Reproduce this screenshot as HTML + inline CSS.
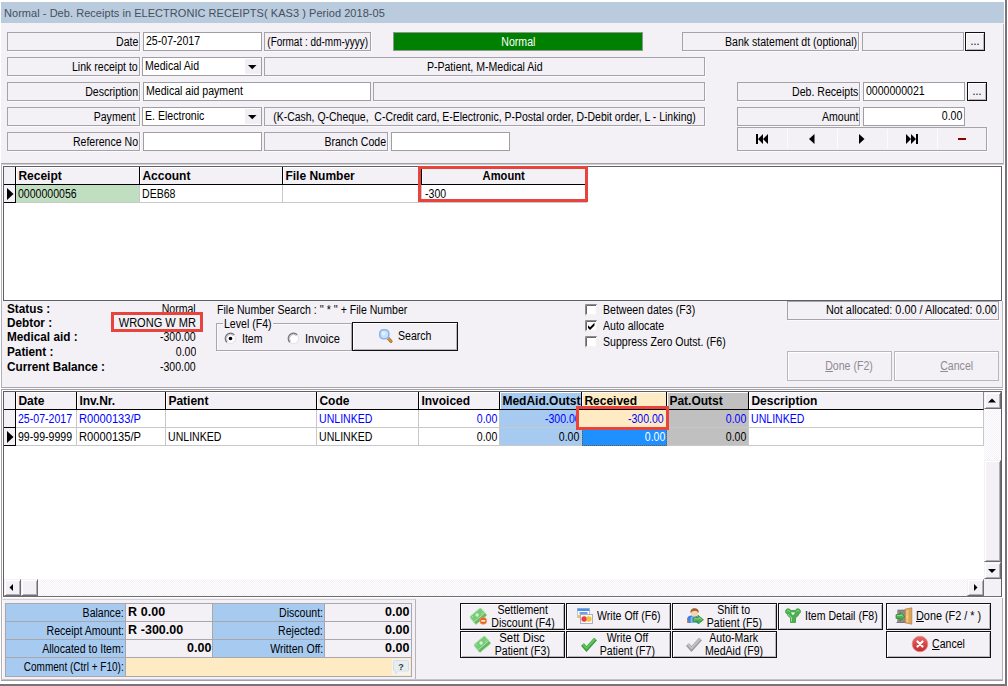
<!DOCTYPE html>
<html>
<head>
<meta charset="utf-8">
<title>Deb. Receipts</title>
<style>
html,body{margin:0;padding:0;}
body{width:1008px;height:686px;overflow:hidden;background:#fff;font-family:"Liberation Sans",sans-serif;font-size:12px;color:#000;position:relative;}
*{box-sizing:border-box;}
.abs,.lb,.in,.t,.btn,.hd,.c,.bl,.bv{position:absolute;white-space:nowrap;overflow:hidden;}
.s{display:inline-block;transform:scaleX(var(--sx,.88));transform-origin:0 50%;}
.r .s,.lb .s,.bl .s,.bv .s{transform-origin:100% 50%;}
.ctr .s,.bt .s,.dis .s{transform-origin:50% 50%;}
.l .s{transform-origin:0 50%;}
#main{left:1px;top:2px;width:1003px;height:679px;background:#f3f0f6;}
#title{left:1px;top:2px;width:1003px;height:21px;background:#b9cbdd;color:#44505e;font-size:11px;line-height:22px;padding-left:3px;letter-spacing:0.045px;}
.lb{height:19px;border:1px solid #a5a3a8;background:#f3f0f6;line-height:19px;text-align:right;padding-right:1px;box-shadow:1px 1px 0 #fbfafc;}
.lb.ctr{text-align:center;padding:0;}
.ctr{display:flex;justify-content:center;}
.lb:not(.ctr),.bl{display:flex;justify-content:flex-end;}
.in{height:19px;background:#fff;border:1px solid #a09ea3;line-height:16px;padding-left:2px;}
.in.r{padding-left:0;padding-right:2px;}
.t{line-height:13px;height:14px;}
.b{font-weight:bold;--sx:.98;}
.r{text-align:right;}
.btn{border:1px solid #111;background:#f3f0f6;box-shadow:inset 1px 1px 0 #fff, inset -1px -1px 0 #b8b6bb;}
.blue{color:#0000ff;}
.hd{height:18px;background:#f3f0f6;border-right:1px solid #000;border-bottom:1px solid #000;font-weight:bold;line-height:18px;padding-left:2.400px;box-shadow:inset 1px 1px 0 #fff;--sx:1;}
.c{height:18px;background:#fff;border-right:1px solid #c8c8c8;border-bottom:1px solid #c8c8c8;line-height:18px;padding-left:2.400px;}
.c.r{padding-right:2px;padding-left:0;}
.dis{border:1px solid #b9b7bc;background:#f3f0f6;color:#8d8b90;text-align:center;line-height:29px;box-shadow:inset 1px 1px 0 #fff;}
.h2{top:392px;height:18px;line-height:19px;}
.r1{top:410px;}
.r2{top:428px;}
.sb{background:#f3f0f6;border:1px solid #f3f0f6;border-right-color:#6f6d72;border-bottom-color:#6f6d72;box-shadow:inset 1px 1px 0 #fff, inset -1px -1px 0 #b0aeb3;}
.bl,.bv{height:18px;line-height:18px;text-align:right;}
.bl{background:#a6caf0;padding-right:1px;border-bottom:1px solid #a9a7ab;}
.bv{background:#f3f0f6;font-weight:bold;font-size:12px;padding-right:1px;border-bottom:1px solid #a9a7ab;--sx:1.04;line-height:17px;}
.trk{background:repeating-conic-gradient(#fff 0% 25%,#f3f0f6 0% 50%) 0 0/2px 2px;}
.bt{text-align:center;height:27px;line-height:13px;}
</style>
</head>
<body>
<div id="main" class="abs"></div>
<div id="title" class="abs">Normal - Deb. Receipts in ELECTRONIC RECEIPTS( KAS3 ) Period 2018-05</div>

<!-- top form -->
<div class="lb" style="left:7px;top:32px;width:133px;"><span class="s">Date</span></div>
<div class="lb" style="left:7px;top:57px;width:133px;"><span class="s">Link receipt to</span></div>
<div class="lb" style="left:7px;top:82px;width:133px;"><span class="s">Description</span></div>
<div class="lb" style="left:7px;top:107px;width:133px;padding-right:4px;"><span class="s">Payment</span></div>
<div class="lb" style="left:7px;top:132px;width:133px;"><span class="s">Reference No</span></div>
<div class="in" style="left:143px;top:32px;width:119px;"><span class="s">25-07-2017</span></div>
<div class="in" style="left:142px;top:57px;width:120px;"><span class="s">Medical Aid</span></div>
<div class="in" style="left:143px;top:82px;width:228px;"><span class="s">Medical aid payment</span></div>
<div class="in" style="left:142px;top:107px;width:120px;"><span class="s">E. Electronic</span></div>
<div class="in" style="left:143px;top:132px;width:119px;"></div>
<div class="lb ctr" style="left:264px;top:32px;width:107px;"><span class="s" style="--sx:0.83;">(Format : dd-mm-yyyy)</span></div>
<div class="abs ctr" style="left:393px;top:32px;width:250px;height:19px;background:#008000;color:#fff;text-align:center;line-height:18px;border:1px solid #8c9a8c;"><span class="s">Normal</span></div>
<div class="lb ctr" style="left:264px;top:57px;width:441px;"><span class="s">P-Patient, M-Medical Aid</span></div>
<div class="lb ctr" style="left:373px;top:82px;width:332px;"></div>
<div class="lb ctr" style="left:264px;top:107px;width:441px;"><span class="s" style="--sx:0.871;">(K-Cash, Q-Cheque,&nbsp; C-Credit card, E-Electronic, P-Postal order, D-Debit order, L - Linking)</span></div>
<div class="lb" style="left:264px;top:132px;width:124px;"><span class="s">Branch Code</span></div>
<div class="in" style="left:391px;top:132px;width:119px;"></div>
<div class="lb" style="left:682px;top:32px;width:177px;"><span class="s">Bank statement dt (optional)</span></div>
<div class="lb" style="left:862px;top:32px;width:102px;"></div>
<div class="btn ctr" style="left:965px;top:32px;width:20px;height:19px;text-align:center;line-height:17px;"><span class="s">...</span></div>
<div class="lb" style="left:737px;top:82px;width:123px;"><span class="s">Deb. Receipts</span></div>
<div class="in" style="left:863px;top:82px;width:102px;"><span class="s">0000000021</span></div>
<div class="btn ctr" style="left:967px;top:82px;width:20px;height:19px;text-align:center;line-height:17px;"><span class="s">...</span></div>
<div class="lb" style="left:737px;top:107px;width:123px;"><span class="s">Amount</span></div>
<div class="in r" style="left:863px;top:107px;width:102px;"><span class="s">0.00</span></div>
<div class="lb" style="left:737px;top:127px;width:250px;height:24px;line-height:24px;"></div>

<!-- nav buttons -->
<svg class="abs" style="left:737px;top:127px;" width="250" height="25" viewBox="0 0 250 25">
  <g fill="#fbfafc"><rect x="50" y="2" width="1" height="20"/><rect x="100" y="2" width="1" height="20"/><rect x="150" y="2" width="1" height="20"/><rect x="200" y="2" width="1" height="20"/></g>
  <g fill="#000">
    <rect x="19" y="7" width="2" height="10"/><path d="M26 7v10l-5-5zM31 7v10l-5-5z"/>
    <path d="M77.500 7v10l-5.500-5z"/>
    <path d="M122 7v10l5.500-5z"/>
    <path d="M169 7v10l5-5zM174 7v10l5-5z"/><rect x="179" y="7" width="2" height="10"/>
  </g>
  <rect x="221" y="11" width="8" height="2" fill="#8b0000"/>
</svg>
<!-- combo arrows -->
<div class="abs" style="left:245px;top:59px;width:16px;height:15px;background:#f1eff3;"></div>
<div class="abs" style="left:245px;top:109px;width:16px;height:15px;background:#f1eff3;"></div>
<svg class="abs" style="left:248px;top:65px;" width="9" height="5"><path d="M0 0h8.500l-4.250 4.250z" fill="#000"/></svg>
<svg class="abs" style="left:248px;top:115px;" width="9" height="5"><path d="M0 0h8.500l-4.250 4.250z" fill="#000"/></svg>

<!-- top panel bottom edge -->
<div class="abs" style="left:1px;top:163px;width:1003px;height:1px;background:#a3a1a6;"></div>
<div class="abs" style="left:1px;top:164px;width:1003px;height:1px;background:#cfcdd2;"></div>
<div class="abs" style="left:1px;top:165px;width:1px;height:223px;background:#b3b1b6;"></div>

<!-- grid 1 -->
<div class="abs" style="left:2px;top:165px;width:1001px;height:136px;background:#fff;"></div>
<div class="abs" style="left:3px;top:166px;width:999px;height:135px;background:#fff;border:1px solid #605e63;"></div>
<div class="abs" style="left:4px;top:167px;width:12px;height:18px;background:#f3f0f6;border-right:1px solid #000;border-bottom:1px solid #000;"></div>
<div class="hd" style="left:16px;width:124px;top:167px;height:18px;line-height:18px;"><span class="s">Receipt</span></div>
<div class="hd" style="left:140px;width:143px;top:167px;height:18px;line-height:18px;"><span class="s">Account</span></div>
<div class="hd" style="left:283px;width:139px;top:167px;height:18px;line-height:18px;"><span class="s">File Number</span></div>
<div class="hd ctr" style="left:422px;width:165px;--sx:.93;top:167px;height:18px;line-height:18px;text-align:center;padding-left:0;"><span class="s">Amount</span></div>
<div class="abs" style="left:4px;top:185px;width:12px;height:18px;background:#f3f0f6;border-right:1px solid #000;border-bottom:1px solid #000;"></div>
<svg class="abs" style="left:4px;top:185px;" width="12" height="18"><path d="M3 3v12l6.500-6z" fill="#000"/></svg>
<div class="c" style="left:16px;width:124px;top:185px;background:#c0dfc0;"><span class="s">0000000056</span></div>
<div class="c" style="left:140px;width:143px;top:185px;"><span class="s">DEB68</span></div>
<div class="c" style="left:283px;width:139px;top:185px;"></div>
<div class="c" style="left:422px;width:165px;top:185px;padding-left:2.500px;"><span class="s">-300</span></div>
<div class="abs" style="left:418px;top:166px;width:170px;height:36px;border:3px solid #e8433c;"></div>

<!-- mid panel -->
<div class="t b" style="left:6.5px;top:303px;"><span class="s">Status :</span></div>
<div class="t b" style="left:6.5px;top:317px;"><span class="s">Debtor :</span></div>
<div class="t b" style="left:6.5px;top:331px;"><span class="s">Medical aid :</span></div>
<div class="t b" style="left:6.5px;top:346px;"><span class="s">Patient :</span></div>
<div class="t b" style="left:6.5px;top:361px;"><span class="s">Current Balance :</span></div>
<div class="t r" style="left:110px;top:303px;width:86px;"><span class="s">Normal</span></div>
<div class="t r" style="left:110px;top:331px;width:86px;"><span class="s">-300.00</span></div>
<div class="t r" style="left:110px;top:346px;width:86px;"><span class="s">0.00</span></div>
<div class="t r" style="left:110px;top:361px;width:86px;"><span class="s">-300.00</span></div>
<div class="abs" style="left:111px;top:312px;width:92px;height:20px;border:3px solid #e8433c;background:#f3f0f6;"></div>
<div class="t r" style="left:110px;top:317px;width:86px;"><span class="s" style="--sx:0.92;">WRONG W MR</span></div>
<div class="t" style="left:217px;top:304px;"><span class="s">File Number Search : '' * '' + File Number</span></div>
<div class="abs" style="left:216px;top:323px;width:136px;height:28px;border:1px solid #a9a7ab;box-shadow:1px 1px 0 #fbfafc, inset 1px 1px 0 #fbfafc;"></div>
<div class="t" style="left:223px;top:318px;background:#f3f0f6;padding:0 1px;width:50px;"><span class="s">Level (F4)</span></div>
<svg class="abs" style="left:224px;top:332px;" width="13" height="13"><circle cx="6.500" cy="6.500" r="5.200" fill="#fff" stroke="#e4e2e6" stroke-width="1.200"/><path d="M2.800 10.200A5.200 5.200 0 0 1 10.200 2.800" fill="none" stroke="#7a787d" stroke-width="1.300"/><path d="M3.600 9.400A4.100 4.100 0 0 1 9.400 3.600" fill="none" stroke="#b0aeb3" stroke-width="0.900"/><circle cx="6.500" cy="6.500" r="1.800" fill="#000"/></svg>
<div class="t" style="left:242px;top:333px;"><span class="s">Item</span></div>
<svg class="abs" style="left:287px;top:332px;" width="13" height="13"><circle cx="6.500" cy="6.500" r="5.200" fill="#fff" stroke="#e4e2e6" stroke-width="1.200"/><path d="M2.800 10.200A5.200 5.200 0 0 1 10.200 2.800" fill="none" stroke="#7a787d" stroke-width="1.300"/><path d="M3.600 9.400A4.100 4.100 0 0 1 9.400 3.600" fill="none" stroke="#b0aeb3" stroke-width="0.900"/></svg>
<div class="t" style="left:305px;top:333px;"><span class="s" style="--sx:0.92;">Invoice</span></div>
<div class="btn" style="left:352px;top:322px;width:106px;height:29px;"></div>
<svg class="abs" style="left:378px;top:328px;" width="16" height="16" viewBox="0 0 16 16"><path d="M9.500 9.500l3.500 3.800" stroke="#b8742a" stroke-width="3.200" stroke-linecap="round"/><path d="M10 10l3 3.300" stroke="#d99a4e" stroke-width="1.200" stroke-linecap="round"/><rect x="1.800" y="1.800" width="9" height="9" rx="3.500" fill="#c9dff8" stroke="#86b6ee" stroke-width="1.600"/><circle cx="5.500" cy="5.500" r="2" fill="#e3effc"/></svg>
<div class="t" style="left:398px;top:330px;"><span class="s">Search</span></div>
<svg class="abs" style="left:585px;top:304px;" width="13" height="46">
 <rect x="0" y="0" width="12" height="11.500" fill="#fff"/><path d="M0.500 11.5v-11h11.500" fill="none" stroke="#8e8c91"/><path d="M1.500 10.5v-9h9.500" fill="none" stroke="#6a686d"/><path d="M0 11h12v-10.500" fill="none" stroke="#eceaee"/>
 <rect x="0" y="16" width="12" height="11.500" fill="#fff"/><path d="M0.500 27.5v-11h11.500" fill="none" stroke="#8e8c91"/><path d="M1.500 26.5v-9h9.500" fill="none" stroke="#6a686d"/><path d="M0 27h12v-10.500" fill="none" stroke="#eceaee"/>
 <rect x="0" y="32" width="12" height="11.500" fill="#fff"/><path d="M0.500 43.5v-11h11.500" fill="none" stroke="#8e8c91"/><path d="M1.500 42.5v-9h9.500" fill="none" stroke="#6a686d"/><path d="M0 43h12v-10.500" fill="none" stroke="#eceaee"/>
 <path d="M3 21.300l2 2l4.500-4.500v2.800l-4.500 4.500l-2-2z" fill="#000"/>
</svg>
<div class="t" style="left:603px;top:304px;"><span class="s">Between dates (F3)</span></div>
<div class="t" style="left:603px;top:320px;"><span class="s">Auto allocate</span></div>
<div class="t" style="left:603px;top:336px;"><span class="s">Suppress Zero Outst. (F6)</span></div>
<div class="lb" style="left:787px;top:301px;width:212px;height:19px;line-height:17px;"><span class="s" style="--sx:0.905;">Not allocated: 0.00 / Allocated: 0.00</span></div>
<div class="abs dis" style="left:787px;top:351px;width:105px;height:30px;padding-left:20px;"><span class="s"><u>D</u>one (F2)</span></div>
<div class="abs dis" style="left:894px;top:351px;width:105px;height:30px;padding-left:20px;"><span class="s"><u>C</u>ancel</span></div>

<!-- separator -->
<div class="abs" style="left:1px;top:387px;width:1002px;height:1px;background:#a9a7ab;"></div>
<div class="abs" style="left:1px;top:388px;width:1003px;height:1px;background:#fbfafc;"></div>

<!-- grid 2 -->
<div class="abs" style="left:1px;top:389px;width:1002px;height:209px;background:#fff;border-top:1px solid #a3a1a6;border-left:1px solid #a3a1a6;"></div>
<div class="abs" style="left:3px;top:391px;width:999px;height:206px;background:#fff;border:1px solid #605e63;border-bottom-color:#6f6d72;"></div>
<div class="abs" style="left:4px;top:392px;width:12px;height:18px;background:#f3f0f6;border-right:1px solid #000;border-bottom:1px solid #000;"></div>
<div class="hd h2" style="left:16px;width:61px;"><span class="s">Date</span></div>
<div class="hd h2" style="left:77px;width:89px;"><span class="s">Inv.Nr.</span></div>
<div class="hd h2" style="left:166px;width:151px;"><span class="s">Patient</span></div>
<div class="hd h2" style="left:317px;width:102px;"><span class="s">Code</span></div>
<div class="hd h2" style="left:419px;width:81px;"><span class="s">Invoiced</span></div>
<div class="hd h2" style="left:500px;width:82px;background:#a6caf0;"><span class="s">MedAid.Outst</span></div>
<div class="hd h2" style="left:582px;width:85px;background:#feebc3;"><span class="s">Received</span></div>
<div class="hd h2" style="left:667px;width:82px;background:#c0c0c0;"><span class="s">Pat.Outst</span></div>
<div class="hd h2" style="left:749px;width:235px;border-right-color:#8d8b90;"><span class="s">Description</span></div>
<div class="abs" style="left:4px;top:410px;width:12px;height:18px;background:#f3f0f6;border-right:1px solid #000;border-bottom:1px solid #000;"></div>
<div class="c blue r1" style="left:16px;width:61px;"><span class="s">25-07-2017</span></div>
<div class="c blue r1" style="left:77px;width:89px;"><span class="s" style="--sx:0.93;">R0000133/P</span></div>
<div class="c blue r1" style="left:166px;width:151px;"></div>
<div class="c blue r1" style="left:317px;width:102px;"><span class="s">UNLINKED</span></div>
<div class="c blue r1 r" style="left:419px;width:81px;"><span class="s">0.00</span></div>
<div class="c blue r1 r" style="left:500px;width:82px;background:#a6caf0;padding-right:0;"><span class="s">-300.00</span></div>
<div class="c blue r1 r" style="left:582px;width:85px;background:#feebc3;padding-right:2px;"><span class="s">-300.00</span></div>
<div class="c blue r1 r" style="left:667px;width:82px;background:#c0c0c0;"><span class="s">0.00</span></div>
<div class="c blue r1" style="left:749px;width:235px;"><span class="s">UNLINKED</span></div>
<div class="abs" style="left:4px;top:428px;width:12px;height:18px;background:#f3f0f6;border-right:1px solid #000;border-bottom:1px solid #000;"></div>
<svg class="abs" style="left:4px;top:428px;" width="12" height="18"><path d="M3 3v12l6.500-6z" fill="#000"/></svg>
<div class="c r2" style="left:16px;width:61px;"><span class="s">99-99-9999</span></div>
<div class="c r2" style="left:77px;width:89px;"><span class="s" style="--sx:0.93;">R0000135/P</span></div>
<div class="c r2" style="left:166px;width:151px;"><span class="s">UNLINKED</span></div>
<div class="c r2" style="left:317px;width:102px;"><span class="s">UNLINKED</span></div>
<div class="c r2 r" style="left:419px;width:81px;"><span class="s">0.00</span></div>
<div class="c r2 r" style="left:500px;width:82px;background:#a6caf0;"><span class="s">0.00</span></div>
<div class="c r2 r" style="left:582px;width:85px;background:#1e90ff;color:#fff;padding-right:1px;border:1px dotted #7a5a20;line-height:16px;"><span class="s">0.00</span></div>
<div class="c r2 r" style="left:667px;width:82px;background:#c0c0c0;"><span class="s">0.00</span></div>
<div class="c r2" style="left:749px;width:235px;"></div>
<div class="abs" style="left:579px;top:410px;width:3px;height:17px;background:#feebc3;"></div>
<div class="abs" style="left:576px;top:406px;width:93px;height:24px;border:3px solid #e8433c;"></div>

<!-- v scrollbar -->
<div class="abs trk" style="left:984px;top:392px;width:17px;height:187px;"></div>
<div class="abs sb" style="left:984px;top:392px;width:17px;height:17px;"></div>
<svg class="abs" style="left:988px;top:398px;" width="9" height="5"><path d="M0 4.500h8l-4-4z" fill="#000"/></svg>
<div class="abs sb" style="left:984px;top:460px;width:17px;height:102px;"></div>
<div class="abs sb" style="left:984px;top:562px;width:17px;height:17px;"></div>
<svg class="abs" style="left:988px;top:569px;" width="9" height="5"><path d="M0 0h8l-4 4z" fill="#000"/></svg>
<!-- h scrollbar -->
<div class="abs trk" style="left:4px;top:579px;width:980px;height:17px;"></div>
<div class="abs sb" style="left:4px;top:579px;width:17px;height:17px;"></div>
<svg class="abs" style="left:9px;top:584px;" width="4" height="7"><path d="M4 0v7l-3.500-3.500z" fill="#000"/></svg>
<div class="abs sb" style="left:21px;top:579px;width:17px;height:17px;"></div>
<div class="abs sb" style="left:967px;top:579px;width:17px;height:17px;"></div>
<svg class="abs" style="left:974px;top:584px;" width="4" height="7"><path d="M0 0v7l3.500-3.500z" fill="#000"/></svg>
<div class="abs" style="left:984px;top:579px;width:17px;height:17px;background:#f3f0f6;"></div>

<!-- bottom panel -->
<div class="abs" style="left:2px;top:599px;width:414px;height:82px;border:1px solid #b5b3b8;border-top-color:#d3d1d6;border-left-color:#fbfafc;border-bottom:0;"></div>
<div class="abs" style="left:5px;top:603px;width:407px;height:74px;background:#a9a7ab;"></div>
<div class="bl" style="left:6px;top:604px;width:119px;"><span class="s">Balance:</span></div>
<div class="bl" style="left:6px;top:622px;width:119px;"><span class="s">Receipt Amount:</span></div>
<div class="bl" style="left:6px;top:640px;width:119px;"><span class="s">Allocated to Item:</span></div>
<div class="bl" style="left:6px;top:658px;width:119px;height:18px;line-height:18px;border-bottom:0;"><span class="s" style="--sx:0.835;">Comment (Ctrl + F10):</span></div>
<div class="bv l" style="left:126px;top:604px;width:86px;text-align:left;padding-left:2px;word-spacing:-1.500px;"><span class="s">R&nbsp; 0.00</span></div>
<div class="bv l" style="left:126px;top:622px;width:86px;text-align:left;padding-left:2px;word-spacing:-1.500px;"><span class="s">R&nbsp; -300.00</span></div>
<div class="bv" style="left:126px;top:640px;width:86px;"><span class="s">0.00</span></div>
<div class="bl" style="left:213px;top:604px;width:111px;"><span class="s">Discount:</span></div>
<div class="bl" style="left:213px;top:622px;width:111px;"><span class="s">Rejected:</span></div>
<div class="bl" style="left:213px;top:640px;width:111px;"><span class="s">Written Off:</span></div>
<div class="bv" style="left:325px;top:604px;width:86px;padding-right:2px;"><span class="s">0.00</span></div>
<div class="bv" style="left:325px;top:622px;width:86px;padding-right:2px;"><span class="s">0.00</span></div>
<div class="bv" style="left:325px;top:640px;width:86px;padding-right:2px;"><span class="s">0.00</span></div>
<div class="abs" style="left:126px;top:658px;width:285px;height:18px;background:#feebc3;"></div>
<svg class="abs" style="left:392px;top:659px;" width="18" height="16" viewBox="0 0 18 16"><rect x="0" y="0" width="18" height="16" fill="#f4f3f2"/><path d="M2.500 1.500h13a1 1 0 0 1 1 1v8.500a1 1 0 0 1-1 1h-9l-2.800 2.800v-2.800h-1.200a1 1 0 0 1-1-1v-8.500a1 1 0 0 1 1-1z" fill="#e6eef2" stroke="#d3dfe6" stroke-width="1"/><text x="9" y="10.500" font-family="Liberation Sans, sans-serif" font-size="9" font-weight="bold" fill="#3a3a3a" text-anchor="middle">?</text></svg>

<!-- action buttons -->
<div class="btn" style="left:460px;top:603px;width:105px;height:27px;"></div>
<div class="btn" style="left:566px;top:603px;width:105px;height:27px;"></div>
<div class="btn" style="left:672px;top:603px;width:105px;height:27px;"></div>
<div class="btn" style="left:778px;top:603px;width:105px;height:27px;"></div>
<div class="btn" style="left:886px;top:603px;width:105px;height:27px;"></div>
<div class="btn" style="left:460px;top:631px;width:105px;height:27px;"></div>
<div class="btn" style="left:566px;top:631px;width:105px;height:27px;"></div>
<div class="btn" style="left:672px;top:631px;width:105px;height:27px;"></div>
<div class="btn" style="left:886px;top:631px;width:105px;height:27px;"></div>
<div class="t bt" style="left:485px;top:604px;width:76px;"><span class="s">Settlement</span><br><span class="s">Discount (F4)</span></div>
<div class="t bt" style="left:484px;top:632px;width:76px;"><span class="s" style="--sx:0.95;">Sett Disc</span><br><span class="s">Patient (F3)</span></div>
<div class="t" style="left:597px;top:610px;"><span class="s">Write Off (F6)</span></div>
<div class="t bt" style="left:592px;top:632px;width:70px;"><span class="s">Write Off</span><br><span class="s">Patient (F7)</span></div>
<div class="t bt" style="left:698px;top:604px;width:72px;"><span class="s">Shift to</span><br><span class="s">Patient (F5)</span></div>
<div class="t bt" style="left:698px;top:632px;width:72px;"><span class="s">Auto-Mark</span><br><span class="s">MedAid (F9)</span></div>
<div class="t" style="left:805px;top:610px;"><span class="s">Item Detail (F8)</span></div>
<div class="t" style="left:916px;top:610px;"><span class="s" style="--sx:0.905;"><u>D</u>one (F2 / * )</span></div>
<div class="t" style="left:932px;top:638px;"><span class="s"><u>C</u>ancel</span></div>

<!-- button icons -->
<svg class="abs" style="left:470px;top:608px;" width="17" height="17" viewBox="0 0 17 17"><g transform="rotate(-40 8 8)"><rect x="0.800" y="6.600" width="14.500" height="6.600" rx="1" fill="#62b862" stroke="#9bdc9b" stroke-width="0.800"/><rect x="0.800" y="3.200" width="14.500" height="6.800" rx="1" fill="#78cc78" stroke="#b4e6b4" stroke-width="0.900"/><circle cx="8" cy="6.600" r="1.700" fill="#d4f0d4"/><path d="M2.500 5h1.500M12 8.300h1.500" stroke="#c2eac2" stroke-width="0.800"/></g><circle cx="13.200" cy="12.800" r="3.500" fill="#e8601c" stroke="#f59a5c" stroke-width="0.800"/><rect x="11.200" y="12.100" width="4" height="1.500" fill="#fff"/></svg>
<svg class="abs" style="left:474px;top:636px;" width="17" height="17" viewBox="0 0 17 17"><g transform="rotate(-40 8 8)"><rect x="0.800" y="6.600" width="14.500" height="6.600" rx="1" fill="#62b862" stroke="#9bdc9b" stroke-width="0.800"/><rect x="0.800" y="3.200" width="14.500" height="6.800" rx="1" fill="#78cc78" stroke="#b4e6b4" stroke-width="0.900"/><circle cx="8" cy="6.600" r="1.700" fill="#d4f0d4"/><path d="M2.500 5h1.500M12 8.300h1.500" stroke="#c2eac2" stroke-width="0.800"/></g></svg>
<svg class="abs" style="left:577px;top:608px;" width="16" height="16" viewBox="0 0 16 16"><rect x="0.500" y="0.500" width="12" height="9" fill="#fdfdfd" stroke="#9dbbe6" stroke-width="0.800"/><rect x="0.500" y="0.500" width="12" height="2.500" fill="#4f8fe0"/><rect x="2.500" y="4" width="8" height="2.200" fill="#6f9fe6"/><rect x="0.500" y="7" width="3" height="2.500" fill="#f2c744"/><rect x="3.500" y="6.500" width="12" height="9" fill="#f7f5f8" stroke="#a9a7b3" stroke-width="0.900"/><circle cx="7.200" cy="11" r="2.800" fill="#e8403c"/><circle cx="11.800" cy="11" r="2.800" fill="#f4c23c"/><path d="M9.500 9.300a2.800 2.800 0 0 1 0 3.400a2.800 2.800 0 0 1 0-3.400z" fill="#f0803c"/></svg>
<svg class="abs" style="left:580px;top:637px;" width="18" height="15" viewBox="0 0 18 15"><path d="M2.500 7.500l4 4.500l9-10" fill="none" stroke="#3a9a3a" stroke-width="4" stroke-linejoin="miter"/><path d="M2.800 7.300l3.700 4l8.700-9.500" fill="none" stroke="#5fc45f" stroke-width="2"/></svg>
<svg class="abs" style="left:686px;top:608px;" width="18" height="16" viewBox="0 0 18 16"><path d="M1 15v-3.500c0-2.500 2-4 4.500-4h3c2.500 0 4 1.500 4 4v3.500z" fill="#3f7fe0"/><path d="M4.500 15v-4.500c0-1.500 1.500-2.500 3-2.500s3 1 3 2.500v4.500z" fill="#7db4f4"/><path d="M1 15v-3h1.500v3z" fill="#d9863c"/><circle cx="8.500" cy="5" r="3.600" fill="#f6d2b0"/><path d="M4.500 5c-0.500-3 1.500-4.700 4-4.700s4.800 1.500 4 4.700c-1-1.500-2-2.200-3.500-2.200s-3.500 0.700-4.500 2.200z" fill="#a0602c"/><path d="M7 9.800h5v-2.600l5.500 4.600l-5.500 4.400v-2.600h-5z" fill="#4caf50" stroke="#2e8a2e" stroke-width="0.700"/><path d="M8 10.800h5v-1.200l3 2.200" fill="none" stroke="#9be09b" stroke-width="0.800"/></svg>
<svg class="abs" style="left:685px;top:637px;" width="18" height="15" viewBox="0 0 18 15"><path d="M2.500 7.500l4 4.500l9-10" fill="none" stroke="#9a9a9a" stroke-width="4"/><path d="M2.800 7.300l3.700 4l8.700-9.500" fill="none" stroke="#c2c2c2" stroke-width="2"/></svg>
<svg class="abs" style="left:784px;top:608px;" width="18" height="16" viewBox="0 0 18 16"><path d="M1.500 3.500c0-1.700 1.300-2.700 2.700-2.700c1.200 0 2 0.700 2.300 1.700h5c0.300-1 1.100-1.700 2.300-1.700c1.400 0 2.700 1 2.700 2.700c0 1.300-0.800 2.200-1.800 2.500c-0.400 1.800-1.700 3-3.200 3.800v4.700h-5v-4.700c-1.500-0.800-2.800-2-3.200-3.800c-1-0.300-1.800-1.200-1.800-2.500z" fill="#4caf50" stroke="#3a9a3a" stroke-width="0.800"/><path d="M3 3.500c0.500-1.500 2-1.500 2.500 0M12.500 3.500c0.500-1.500 2-1.500 2.500 0M7.500 13.500v-4M4 6c1 2 2.500 3 3.500 3.500" fill="none" stroke="#9be09b" stroke-width="1"/><path d="M6.800 4.500h4.400l-2.200 2.800z" fill="#fff"/></svg>
<svg class="abs" style="left:895px;top:607px;" width="18" height="18" viewBox="0 0 18 18"><rect x="2.800" y="3" width="8" height="12.500" fill="#8c8c8c" stroke="#6a6a6a" stroke-width="0.600"/><rect x="1.500" y="15" width="9" height="1" fill="#777"/><path d="M10 2.200l6.800-1.400v16.400l-6.800-1.400z" fill="#dba45a" stroke="#b87a30" stroke-width="0.700"/><path d="M11.200 3l2.300-0.500v13l-2.300-0.500z" fill="#efc584"/><circle cx="12" cy="9.500" r="0.800" fill="#f7e35a"/><path d="M1 7.600h4v-2.300l4.800 4.200l-4.800 4.200v-2.300h-4z" fill="#4caf50" stroke="#2e8a2e" stroke-width="0.700"/><path d="M2 8.600h4v-1l2.300 1.900" fill="none" stroke="#a6e4a6" stroke-width="0.800"/></svg>
<svg class="abs" style="left:911px;top:635px;" width="18" height="18" viewBox="0 0 18 18"><defs><linearGradient id="rg" x1="0" y1="0" x2="0" y2="1"><stop offset="0" stop-color="#e86a6a"/><stop offset="1" stop-color="#c42828"/></linearGradient></defs><circle cx="9" cy="9" r="7.800" fill="url(#rg)" stroke="#e48a8a" stroke-width="0.800"/><path d="M6.500 6.500l5 5M11.500 6.500l-5 5" stroke="#fff" stroke-width="2.200" stroke-linecap="round"/></svg>


<!-- window edges -->
<div class="abs" style="left:1px;top:598px;width:1px;height:82px;background:#b3b1b6;"></div>
<div class="abs" style="left:1px;top:679px;width:1002px;height:1px;background:#c5c3c8;"></div>
<div class="abs" style="left:1px;top:680px;width:1002px;height:1px;background:#a3a1a6;"></div>
<div class="abs" style="left:1003px;top:24px;width:1px;height:140px;background:#bdbbc0;"></div>
<div class="abs" style="left:1002px;top:301px;width:1px;height:87px;background:#bdbbc0;"></div>
<div class="abs" style="left:1002px;top:598px;width:1px;height:83px;background:#b3b1b6;"></div>
<div class="abs" style="left:1003px;top:165px;width:1px;height:516px;background:#fff;"></div>
<div class="abs" style="left:0;top:684px;width:1007px;height:2px;background:#77757a;"></div>
<div class="abs" style="left:1005px;top:0;width:2px;height:686px;background:#77757a;"></div>
</body>
</html>
